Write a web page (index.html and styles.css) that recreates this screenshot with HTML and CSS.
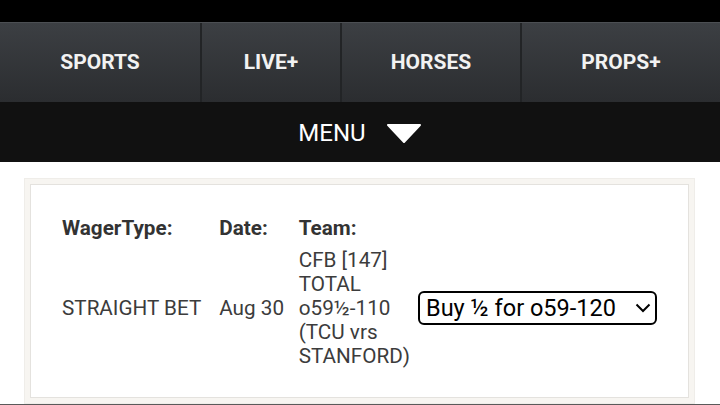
FILE: index.html
```html
<!DOCTYPE html>
<html lang="en">
<head>
    <meta charset="UTF-8">
    <meta name="viewport" content="width=device-width, initial-scale=1.0">
    <title>Wager</title>
    <link rel="stylesheet" href="styles.css">
</head>
<body>
    <header class="header">
        <nav class="nav">
            <a href="#" class="nav-item">SPORTS</a>
            <a href="#" class="nav-item">LIVE+</a>
            <a href="#" class="nav-item">HORSES</a>
            <a href="#" class="nav-item">PROPS+</a>
        </nav>
        <div class="menu-bar">
            <span class="menu-label">MENU</span>
            <svg class="menu-arrow" width="36" height="19" viewBox="0 0 36 19">
                <path d="M2 1 L34 1 L18 18 Z" fill="#fff" stroke="#fff" stroke-width="2" stroke-linejoin="round"/>
            </svg>
        </div>
    </header>

    <main class="main">
        <div class="box">
            <div class="box-inner">
                <table class="wager-table">
                    <thead>
                        <tr>
                            <th class="col-type">WagerType:</th>
                            <th class="col-date">Date:</th>
                            <th class="col-team">Team:</th>
                            <th></th>
                        </tr>
                    </thead>
                    <tbody>
                        <tr>
                            <td>STRAIGHT BET</td>
                            <td>Aug 30</td>
                            <td class="team">CFB [147]<br>TOTAL<br>o59½-110<br>(TCU vrs STANFORD)</td>
                            <td>
                                <div class="select-wrap">
                                    <select class="buy-select">
                                        <option>Buy ½ for o59-120</option>
                                    </select>
                                    <svg class="select-chevron" width="16" height="10" viewBox="0 0 16 10">
                                        <path d="M1.5 1.5 L8 8 L14.5 1.5" fill="none" stroke="#000" stroke-width="2"/>
                                    </svg>
                                </div>
                            </td>
                        </tr>
                    </tbody>
                </table>
            </div>
        </div>
    </main>
    <div class="bottom-line"></div>
</body>
</html>
```

FILE: styles.css
```css
body {
    font-family: Roboto, 'Liberation Sans', sans-serif;
    margin: 0;
    padding: 0;
    background-color: #fff;
    color: #333;
}

.header {
    background-color: #000;
    padding-top: 22px;
}

.nav {
    display: grid;
    grid-template-columns: 200px 140px 180px 200px;
    height: 80px;
    background: linear-gradient(#3c3f43, #2b2d30);
    border-top: 1px solid #4c4f53;
    box-sizing: border-box;
}

.nav-item {
    display: flex;
    justify-content: center;
    align-items: center;
    padding-bottom: 2px;
    color: #f2f2f2;
    font-size: 21px;
    font-weight: bold;
    text-decoration: none;
}

.nav-item + .nav-item {
    border-left: 2px solid #222426;
}

.menu-bar {
    height: 60px;
    background-color: #111;
    display: flex;
    justify-content: center;
    align-items: center;
    gap: 20px;
}

.menu-label {
    color: #fff;
    font-size: 24px;
    margin-top: 2px;
}

.menu-arrow {
    margin-top: 2px;
}

.main {
    padding: 16px 24px 0 24px;
}

.box {
    width: 671px;
    box-sizing: border-box;
    background-color: #f7f5f1;
    border: 1px solid #efede9;
    padding: 5px;
}

.box-inner {
    background-color: #fff;
    border: 1px solid #e4e2de;
    padding: 31px 31px 29px 31px;
}

.wager-table {
    border-collapse: collapse;
    font-size: 20.7px;
    line-height: 24px;
}

.wager-table th {
    text-align: left;
    font-weight: bold;
    padding: 0 0 8px 0;
    color: #333;
}

.wager-table td {
    padding: 0;
    vertical-align: middle;
    color: #3c3c3c;
}

.col-type {
    width: 158px;
}

.col-date {
    width: 80px;
}

.col-team {
    width: 119px;
}

.team {
    padding-right: 8px !important;
}

.select-wrap {
    position: relative;
    width: 239px;
}

.buy-select {
    appearance: none;
    -webkit-appearance: none;
    width: 100%;
    height: 34px;
    font-family: Roboto, 'Liberation Sans', sans-serif;
    font-size: 23.5px;
    color: #000;
    background-color: #fff;
    border: 2px solid #000;
    border-radius: 6px;
    padding: 0 6px;
    box-sizing: border-box;
}

.select-chevron {
    position: absolute;
    right: 6px;
    top: 12px;
    pointer-events: none;
}

.bottom-line {
    height: 2px;
    background-color: #5a5a5a;
}
```
